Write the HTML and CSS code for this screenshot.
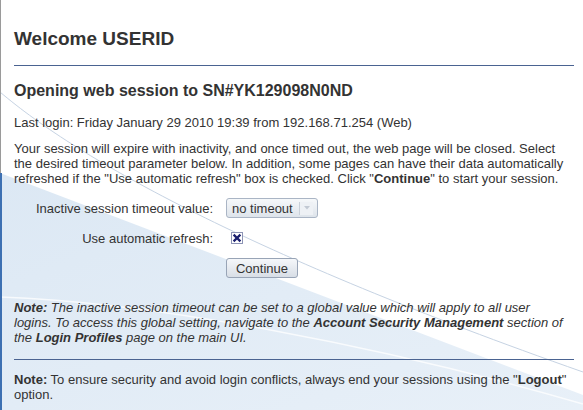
FILE: index.html
```html
<!DOCTYPE html>
<html>
<head>
<meta charset="utf-8">
<link rel="stylesheet" href="styles.css">
</head>
<body>
<svg class="backdrop" width="583" height="410" viewBox="0 0 583 410" aria-hidden="true">
  <defs>
    <linearGradient id="bg" x1="0" y1="0" x2="1" y2="1">
      <stop offset="0" stop-color="#dce8f4"/>
      <stop offset="1" stop-color="#e8f0f8"/>
    </linearGradient>
  </defs>
  <polygon points="0,173 583,395 583,410 0,410" fill="url(#bg)"/>
  <path d="M0,92 C80,160 250,255 583,372" fill="none" stroke="#c6d3e3" stroke-width="1"/>
  <path d="M0,297 C150,302 380,345 583,404" fill="none" stroke="#ffffff" stroke-width="1.5" opacity="0.75"/>
  <line x1="0.5" y1="0" x2="0.5" y2="174" stroke="#9a9a9a"/>
  <rect x="0" y="173" width="2" height="237" fill="#3d70b2"/>
</svg>
<main class="page">
  <h1 class="title">Welcome USERID</h1>
  <hr class="rule">
  <h2 class="subtitle">Opening web session to SN#YK129098N0ND</h2>
  <p class="last">Last login: Friday January 29 2010 19:39 from 192.168.71.254 (Web)</p>
  <p class="intro">Your session will expire with inactivity, and once timed out, the web page will be closed. Select the desired timeout parameter below. In addition, some pages can have their data automatically refreshed if the "Use automatic refresh" box is checked. Click "<b>Continue</b>" to start your session.</p>
  <div class="form">
    <label class="lbl">Inactive session timeout value:</label>
    <div class="cell">
      <div class="select">
        <span class="sel-text">no timeout</span>
        <span class="sel-btn"><svg width="6" height="4" viewBox="0 0 6 4"><path d="M0,0 L6,0 L3,3.5 Z" fill="#c2c9d3"/></svg></span>
      </div>
    </div>
    <label class="lbl">Use automatic refresh:</label>
    <div class="cell">
      <span class="check"><svg width="12" height="12" viewBox="0 0 12 12"><rect x="0.5" y="0.5" width="11" height="11" fill="#fff" stroke="#8d94b5"/><path d="M2.6,2.6 L9.4,9.4 M9.4,2.6 L2.6,9.4" stroke="#1b1f6e" stroke-width="2.2"/></svg></span>
    </div>
    <span class="lbl"></span>
    <div class="cell"><button class="btn">Continue</button></div>
  </div>
  <p class="note"><i><b>Note:</b> The inactive session timeout can be set to a global value which will apply to all user<br>logins. To access this global setting, navigate to the <b>Account Security Management</b> section of the <b>Login Profiles</b> page on the main UI.</i></p>
  <hr class="rule rule2">
  <p class="note2"><b>Note:</b> To ensure security and avoid login conflicts, always end your sessions using the "<b>Logout</b>" option.</p>
</main>
</body>
</html>
```

FILE: styles.css
```css
html, body {
  margin: 0;
  padding: 0;
  background: #ffffff;
}
body {
  width: 583px;
  height: 410px;
  overflow: hidden;
  position: relative;
  font-family: "Liberation Sans", Arial, sans-serif;
  font-size: 13px;
  line-height: 15px;
  color: #333333;
}
.backdrop {
  position: absolute;
  left: 0;
  top: 0;
  z-index: 0;
}
.page {
  position: relative;
  z-index: 1;
  width: 560px;
  padding: 28px 0 0 14px;
}
.title {
  margin: 0;
  font-size: 19px;
  line-height: 22px;
  font-weight: bold;
  color: #333;
}
.rule {
  margin: 15px 0 0 0;
  border: 0;
  border-top: 1px solid #4a6391;
  height: 0;
}
.subtitle {
  margin: 16px 0 0 0;
  font-size: 16px;
  line-height: 18px;
  font-weight: bold;
  color: #333;
}
.last {
  margin: 15px 0 0 0;
}
.intro {
  margin: 11px 0 0 0;
}
.form {
  margin-top: 12px;
  display: grid;
  grid-template-columns: 199px auto;
  grid-auto-rows: 20px;
  row-gap: 10px;
  column-gap: 13px;
  align-items: center;
}
.lbl {
  text-align: right;
}
.cell {
  display: flex;
  align-items: center;
  height: 20px;
}
.select {
  width: 90px;
  height: 18px;
  border: 1px solid #aab5c5;
  border-radius: 3px;
  background: linear-gradient(#f6f8fa, #dee4eb);
  display: flex;
  align-items: center;
  justify-content: space-between;
}
.sel-text {
  padding-left: 5px;
}
.sel-btn {
  width: 13px;
  height: 13px;
  margin-right: 4px;
  border-left: 1px solid #c9d0d9;
  display: flex;
  align-items: center;
  justify-content: center;
  background: #eef1f5;
}
.check {
  display: flex;
  margin-left: 5px;
}
.btn {
  width: 72px;
  height: 20px;
  padding: 0;
  border: 1px solid #98a4b6;
  border-radius: 3px;
  background: linear-gradient(#f5f7fa, #d8dee6);
  font-family: "Liberation Sans", Arial, sans-serif;
  font-size: 13px;
  color: #333;
}
.note {
  margin: 22px 0 0 0;
}
.rule2 {
  margin-top: 14px;
}
.note2 {
  margin: 12px 0 0 0;
}
```
